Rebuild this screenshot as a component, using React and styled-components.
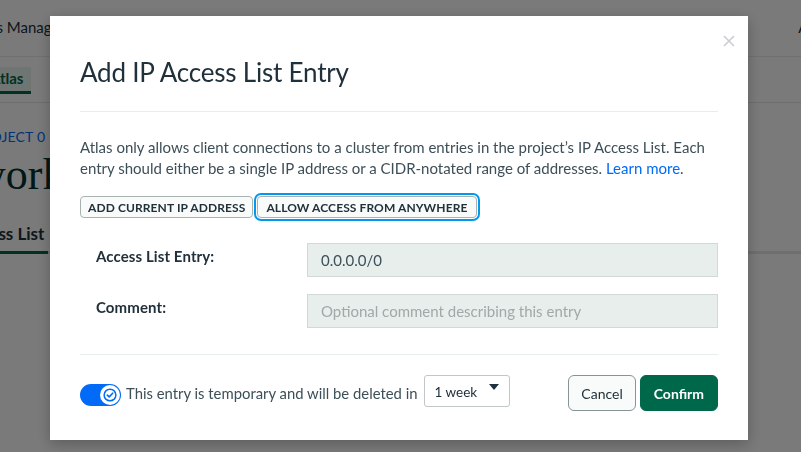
import React from "react";
import styled, { createGlobalStyle } from "styled-components";

const Global = createGlobalStyle`
  html, body { margin: 0; padding: 0; }
  body {
    width: 801px; height: 452px; overflow: hidden; background: #ffffff;
    font-family: Lato, "Noto Sans", sans-serif;
  }
  * { box-sizing: border-box; }
`;

/* ---------- background page ---------- */
const Page = styled.div`
  width: 801px; height: 452px; overflow: hidden; background: #fff;
  display: flex; flex-direction: column;
`;
const TopBar = styled.div`
  height: 57px; border-bottom: 1px solid #e8edeb;
  display: flex; align-items: center; white-space: nowrap;
  font-size: 15px; color: #21313c; padding-bottom: 2px;
`;
const TopText = styled.span`
  margin-left: ${p => p.$offset || 0}px;
  ${p => p.$right && "margin-left: auto; margin-right: -72px;"}
`;
const NavBar = styled.div`
  height: 46px; border-bottom: 1px solid #e3e8e6; display: flex; align-items: flex-end;
`;
const NavTab = styled.div`
  font-weight: 700; font-size: 15px; color: #00684a; margin-left: -18px;
  padding: 2px 8px 4px 8px; border-bottom: 3px solid #00684a; margin-bottom: 8px;
  background: #e9f4ef; white-space: nowrap;
`;
const Content = styled.div`
  display: flex; flex-direction: column; padding-top: 25px;
`;
const Crumb = styled.div`
  font-size: 14px; color: #016bf8; margin-left: -27px; letter-spacing: 0.2px; white-space: nowrap;
`;
const PageTitle = styled.div`
  font-family: "Liberation Serif", serif; font-size: 44px; color: #023430;
  margin-left: -26px; margin-top: 4px; line-height: 52px; white-space: nowrap;
`;
const TabRow = styled.div`
  margin-top: 22px; border-bottom: 3px solid #e3e8e6; display: flex;
`;
const PageTab = styled.div`
  font-weight: 700; font-size: 17px; color: #21313c; margin-left: -57px; white-space: nowrap;
  padding: 0 4px 7px 0; border-bottom: 3px solid #00684a; margin-bottom: -3px;
`;

/* ---------- overlay and modal ---------- */
const Overlay = styled.div`
  position: fixed; inset: 0; background: rgba(0, 0, 0, 0.52);
  display: flex; align-items: flex-start; padding: 16px 0 0 50px;
`;
const Modal = styled.div`
  position: relative;
  width: 698px; height: 424px; background: #fff;
  box-shadow: 0 4px 14px rgba(0,0,0,0.25);
  padding: 0 30px; display: flex; flex-direction: column;
  color: #21313c;
`;
const Close = styled.button`
  position: absolute; top: 15px; right: 9px; width: 20px; height: 20px;
  border: 0; background: none; padding: 0; cursor: pointer;
  display: flex; align-items: center; justify-content: center;
`;
const Title = styled.h2`
  margin: 0; padding-top: 42px; padding-bottom: 25px;
  font-size: 26px; font-weight: 400; line-height: 28px; color: #21313c;
  border-bottom: 1px solid #e7eeec; letter-spacing: -0.2px;
`;
const Text = styled.p`
  margin: 25px 0 0; font-size: 15px; line-height: 21px; color: #3d4f58;
`;
const Link = styled.a`
  color: #016bf8; text-decoration: none;
`;
const ButtonRow = styled.div`
  display: flex; gap: 4px; margin-top: 17px; align-items: center;
`;
const SmallButton = styled.button`
  height: 22px; padding: 0 ${p => (p.$focused ? 8 : 7)}px; border-radius: 4px;
  border: 1px solid #a8b3b1; background: #f9fbfa;
  font-family: inherit; font-size: 12px; font-weight: 700; color: #21313c;
  letter-spacing: 0.1px;
  ${p => p.$focused && `box-shadow: 0 0 0 1px #fff, 0 0 0 3px #0498ec;`}
`;
const Form = styled.div`
  display: flex; flex-direction: column; gap: 17px; margin-top: 25px;
  padding-bottom: 26px; border-bottom: 1px solid #e7eeec;
`;
const Row = styled.div`
  display: flex; align-items: flex-start;
`;
const Label = styled.label`
  width: 227px; padding-left: 16px; padding-top: 4px;
  font-size: 15px; font-weight: 700; color: #21313c; letter-spacing: 0.1px;
`;
const Input = styled.input`
  flex: 1; height: 34px; background: #e7eeec; border: 1px solid #d1d8d6;
  padding: 0 13px; font-family: inherit; font-size: 15px; color: #3d4f58;
  border-radius: 0; outline: none;
  &::placeholder { color: #a0a9a8; }
`;
const Footer = styled.div`
  display: flex; align-items: center; margin-top: 20px;
`;
const Toggle = styled.div`
  width: 41px; height: 22px; border-radius: 11px; background: #016bf8;
  display: flex; align-items: center; justify-content: flex-end; padding-right: 1px;
  flex-shrink: 0; margin-top: 4px;
`;
const Knob = styled.div`
  width: 20px; height: 20px; border-radius: 50%; background: #fff;
  display: flex; align-items: center; justify-content: center;
`;
const FooterText = styled.span`
  margin-left: 5px; font-size: 14.85px; color: #3d4f58;
`;
const Select = styled.div`
  margin-left: 6px; width: 86px; height: 32px; border: 1px solid #c1c7c6; border-radius: 3px;
  display: flex; align-items: center; justify-content: space-between; padding: 2px 10px 0 10px;
  font-size: 13.5px; color: #21313c; margin-bottom: 4px;
`;
const Caret = styled.span`
  width: 0; height: 0; border-left: 5px solid transparent; border-right: 5px solid transparent;
  border-top: 6px solid #21313c; margin-top: -10px;
`;
const Spacer = styled.div` flex: 1; `;
const ActionButton = styled.button`
  height: 36px; border-radius: 6px; font-family: inherit; font-size: 14px;
  padding: 0 ${p => (p.$primary ? 13 : 12)}px; margin-left: 4px;
  border: 1px solid ${p => (p.$primary ? "#00684a" : "#889397")};
  background: ${p => (p.$primary ? "#00684a" : "#f9fbfa")};
  color: ${p => (p.$primary ? "#fff" : "#21313c")};
  font-weight: ${p => (p.$primary ? 700 : 400)};
`;

export default function App() {
  return (
    <>
      <Global />
      <Page>
        <TopBar>
          <TopText $offset={-42}>Access Manager</TopText>
          <TopText $right>All Clusters</TopText>
        </TopBar>
        <NavBar>
          <NavTab>Atlas</NavTab>
        </NavBar>
        <Content>
          <Crumb>PROJECT 0</Crumb>
          <PageTitle>work Access</PageTitle>
          <TabRow>
            <PageTab>IP Access List</PageTab>
          </TabRow>
        </Content>
      </Page>
      <Overlay>
        <Modal>
          <Close aria-label="Close">
            <svg width="12" height="12" viewBox="0 0 12 12">
              <path d="M1 1L11 11M11 1L1 11" stroke="#c9ced0" strokeWidth="1.6" />
            </svg>
          </Close>
          <Title>Add IP Access List Entry</Title>
          <Text>
            Atlas only allows client connections to a cluster from entries in the project’s IP Access List. Each
            <br />
            entry should either be a single IP address or a CIDR-notated range of addresses. <Link>Learn more</Link>.
          </Text>
          <ButtonRow>
            <SmallButton>ADD CURRENT IP ADDRESS</SmallButton>
            <SmallButton $focused>ALLOW ACCESS FROM ANYWHERE</SmallButton>
          </ButtonRow>
          <Form>
            <Row>
              <Label>Access List Entry:</Label>
              <Input value="0.0.0.0/0" readOnly />
            </Row>
            <Row>
              <Label>Comment:</Label>
              <Input placeholder="Optional comment describing this entry" />
            </Row>
          </Form>
          <Footer>
            <Toggle>
              <Knob>
                <svg width="14" height="14" viewBox="0 0 14 14">
                  <circle cx="7" cy="7" r="6.6" fill="#016bf8" />
                  <circle cx="7" cy="7" r="5.1" fill="#fff" />
                  <path d="M4.3 7.1L6.2 8.9L9.7 5.2" stroke="#016bf8" strokeWidth="1.6" fill="none" strokeLinecap="round" strokeLinejoin="round" />
                </svg>
              </Knob>
            </Toggle>
            <FooterText>This entry is temporary and will be deleted in</FooterText>
            <Select>
              <span>1 week</span>
              <Caret />
            </Select>
            <Spacer />
            <ActionButton>Cancel</ActionButton>
            <ActionButton $primary>Confirm</ActionButton>
          </Footer>
        </Modal>
      </Overlay>
    </>
  );
}
